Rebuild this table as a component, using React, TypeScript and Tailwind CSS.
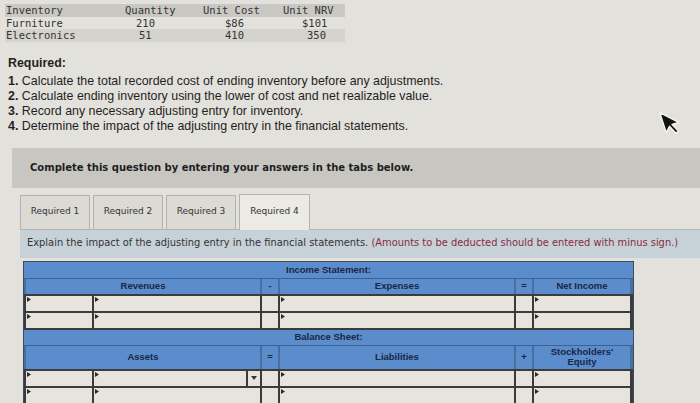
import React from "react";

const mono = { fontFamily: '"DejaVu Sans Mono", "Liberation Mono", monospace' };
const sans = { fontFamily: '"Liberation Sans", Arial, sans-serif' };
const verd = { fontFamily: '"DejaVu Sans", Verdana, sans-serif' };

const COLS = "grid grid-cols-[66px_166px_16px_234px_16px_96px] gap-x-[2px]";
const TOP = "ml-[5px] w-[340px] grid grid-cols-[120px_78px_80px_62px]";

function Marker() {
  return (
    <svg width="4" height="5" viewBox="0 0 4 5" className="mt-[1px] ml-[1px] shrink-0">
      <path d="M0 0 L4 2.5 L0 5 Z" fill="#2a2a2a" />
    </svg>
  );
}

function Cell({ marker = true, select = false }: { marker?: boolean; select?: boolean }) {
  return (
    <div className="bg-[#e6e4dd] flex items-start">
      {marker ? <Marker /> : null}
      {select ? (
        <div className="ml-auto h-full w-[14px] border-l-2 border-[#3b3b3b] flex items-center justify-center">
          <svg width="6" height="4" viewBox="0 0 6 4">
            <path d="M0 0 L6 0 L3 4 Z" fill="#333" />
          </svg>
        </div>
      ) : null}
    </div>
  );
}

function DataRow({ h, select = false }: { h: string; select?: boolean }) {
  return (
    <div className={`${COLS} ${h}`}>
      <Cell />
      <Cell select={select} />
      <Cell marker={false} />
      <Cell />
      <Cell marker={false} />
      <Cell />
    </div>
  );
}

const hd = "text-[9.5px] font-bold text-[#1a2644] flex items-center justify-center leading-[10px] text-center";

export default function App() {
  return (
    <div className="relative w-[700px] h-[403px] overflow-hidden bg-[#e3e1db] text-[#222]">
      {/* inventory data */}
      <div className="pt-[4px] text-[10.5px] leading-[12.5px] text-[#333]" style={mono}>
        <div className={`${TOP} bg-[#c9c8c3]`}>
          <div className="pl-[1px]">Inventory</div>
          <div>Quantity</div>
          <div>Unit Cost</div>
          <div>Unit NRV</div>
        </div>
        <div className={TOP}>
          <div className="pl-[1px]">Furniture</div>
          <div className="pl-[11px]">210</div>
          <div className="pl-[22px]">$86</div>
          <div className="pl-[19px]">$101</div>
        </div>
        <div className={`${TOP} bg-[#d5d3cd]`}>
          <div className="pl-[1px]">Electronics</div>
          <div className="pl-[14px]">51</div>
          <div className="pl-[22px]">410</div>
          <div className="pl-[24px]">350</div>
        </div>
      </div>

      {/* required */}
      <div className="mt-[14px] ml-[8px] text-[12.4px] leading-[15px] text-[#1f1f1f]" style={sans}>
        <div className="font-bold">Required:</div>
        <div className="mt-[3px]"><b>1.</b> Calculate the total recorded cost of ending inventory before any adjustments.</div>
        <div><b>2.</b> Calculate ending inventory using the lower of cost and net realizable value.</div>
        <div><b>3.</b> Record any necessary adjusting entry for inventory.</div>
        <div><b>4.</b> Determine the impact of the adjusting entry in the financial statements.</div>
      </div>

      {/* complete box */}
      <div className="mt-[14px] ml-[12px] h-[40px] bg-[#c7c6c1] flex items-center pl-[18px]" style={verd}>
        <span className="text-[10px] font-bold text-[#1e1e1e]">
          Complete this question by entering your answers in the tabs below.
        </span>
      </div>

      {/* tabs */}
      <div className="ml-[20px] mt-[6px] flex items-end gap-[3px] border-b border-[#b5b3ad] h-[36px]" style={verd}>
        {["Required 1", "Required 2", "Required 3"].map((t) => (
          <div key={t} className="w-[70px] h-[34px] bg-[#dcdad4] border border-[#b4b2ac] border-b-0 flex items-center justify-center text-[9px] text-[#333]">
            {t}
          </div>
        ))}
        <div className="w-[71px] h-[36px] bg-[#eceae4] border border-[#b4b2ac] border-b-0 -mb-[1px] flex items-center justify-center text-[9px] text-[#333]">
          Required 4
        </div>
      </div>

      {/* explain band */}
      <div className="ml-[20px] h-[28px] bg-[#c6d2d8] flex items-center pl-[7px] text-[9.9px] text-[#333] whitespace-nowrap" style={verd}>
        Explain the impact of the adjusting entry in the financial statements.&nbsp;
        <span className="text-[#8a2b3b]">(Amounts to be deducted should be entered with minus sign.)</span>
      </div>

      {/* table */}
      <div className="ml-[23px] mt-[3px] w-[611px] border border-[#3f4a5a] bg-[#5b8dcc]" style={sans}>
        <div className={`h-[17px] ${hd} border-b border-[#40608f]`}>Income Statement:</div>
        <div className="bg-[#4a6f9f] px-[2px]">
          <div className={`${COLS} h-[15px]`}>
            <div className={`col-span-2 bg-[#5b8dcc] ${hd}`}>Revenues</div>
            <div className={`bg-[#5b8dcc] ${hd}`}>-</div>
            <div className={`bg-[#5b8dcc] ${hd}`}>Expenses</div>
            <div className={`bg-[#5b8dcc] ${hd}`}>=</div>
            <div className={`bg-[#5b8dcc] ${hd}`}>Net Income</div>
          </div>
        </div>
        <div className="bg-[#3b3b3b] p-[2px] flex flex-col gap-[2px]">
          <DataRow h="h-[15px]" />
          <DataRow h="h-[15px]" />
        </div>
        <div className={`h-[16px] ${hd} border-b border-[#40608f]`}>Balance Sheet:</div>
        <div className="bg-[#4a6f9f] px-[2px]">
          <div className={`${COLS} h-[23px]`}>
            <div className={`col-span-2 bg-[#5b8dcc] ${hd}`}>Assets</div>
            <div className={`bg-[#5b8dcc] ${hd}`}>=</div>
            <div className={`bg-[#5b8dcc] ${hd}`}>Liabilities</div>
            <div className={`bg-[#5b8dcc] ${hd}`}>+</div>
            <div className={`bg-[#5b8dcc] ${hd}`}>
              Stockholders'
              <br />
              Equity
            </div>
          </div>
        </div>
        <div className="bg-[#3b3b3b] p-[2px] flex flex-col gap-[2px]">
          <DataRow h="h-[15px]" select />
          <DataRow h="h-[15px]" />
        </div>
      </div>

      {/* cursor */}
      <svg className="absolute left-[654px] top-[109px]" width="28" height="32" viewBox="0 0 28 32">
        <g transform="rotate(-18 8 4)">
          <path d="M6 3 L6 24 L11 19 L15 27.5 L18 26.3 L14 18 L21 18 Z" fill="#111" stroke="#f4f4f4" strokeWidth="1.4" strokeLinejoin="round" />
        </g>
      </svg>
    </div>
  );
}
